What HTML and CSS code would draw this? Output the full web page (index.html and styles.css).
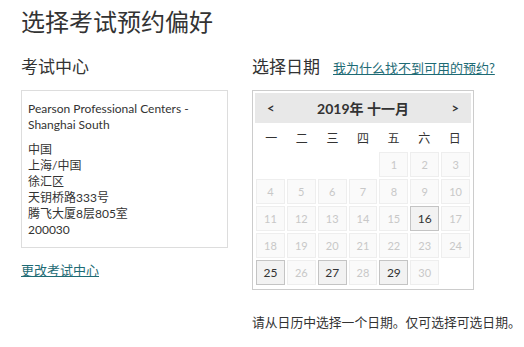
FILE: index.html
```
<!doctype html>
<html lang="zh-CN"><head>
<meta charset="utf-8">
<title>选择考试预约偏好</title>
<link rel="stylesheet" href="styles.css">
</head>
<body>
<div class="page">
<h1>选择考试预约偏好</h1>

<div class="columns">
	<div class="col-left">
		<h2>考试中心</h2>
		<div class="center-box">
			<div class="center-name">Pearson Professional Centers - Shanghai South</div>
			<div class="center-addr">
				中国<br>
				上海/中国<br>
				徐汇区<br>
				天钥桥路333号<br>
				腾飞大厦8层805室<br>
				200030
			</div>
		</div>
		<a class="link change" href="#">更改考试中心</a>
	</div>

	<div class="col-right">
		<div class="date-head">
			<h2>选择日期</h2>
			<a class="link why" href="#">我为什么找不到可用的预约?</a>
		</div>
		<div class="calendar">
			<div class="cal-bar">
				<span class="nav">&lt;</span>
				<span class="month">2019年 十一月</span>
				<span class="nav">&gt;</span>
			</div>
			<div class="weekdays">
				<span>一</span><span>二</span><span>三</span><span>四</span><span>五</span><span>六</span><span>日</span>
			</div>
			<div class="days">
				<span class="blank"></span><span class="blank"></span><span class="blank"></span><span class="blank"></span>
				<span>1</span><span>2</span><span>3</span>
				<span>4</span><span>5</span><span>6</span><span>7</span><span>8</span><span>9</span><span>10</span>
				<span>11</span><span>12</span><span>13</span><span>14</span><span>15</span><span class="open">16</span><span>17</span>
				<span>18</span><span>19</span><span>20</span><span>21</span><span>22</span><span>23</span><span>24</span>
				<span class="open">25</span><span>26</span><span class="open">27</span><span>28</span><span class="open">29</span><span>30</span>
			</div>
		</div>
		<p class="hint">请从日历中选择一个日期。仅可选择可选日期。</p>
	</div>
</div>
</div>
</body></html>
```

FILE: styles.css
```
body {
	margin: 0;
	font-family: Lato, "Noto Sans CJK SC", sans-serif;
	color: #333;
	background: #fff;
}
.page { padding: 6px 0 0 21px; }
h1 {
	margin: 0;
	font-size: 24px;
	line-height: 32px;
	font-weight: normal;
}
h2 {
	margin: 0;
	font-size: 17px;
	line-height: 24px;
	font-weight: normal;
}
.columns {
	display: flex;
	gap: 24px;
	margin-top: 17px;
}
.col-left { width: 207px; }
.col-right { flex: 1; }

.center-box {
	margin-top: 11px;
	border: 1px solid #ddd;
	padding: 10px 6px 9px 6px;
	font-size: 12px;
	line-height: 16px;
}
.center-addr { margin-top: 9px; }

.link {
	color: #1e6b75;
	text-decoration: underline;
}
.change {
	display: block;
	margin-top: 14px;
	font-size: 13px;
	line-height: 16px;
}

.date-head {
	display: flex;
	align-items: baseline;
	gap: 13px;
}
.why { font-size: 13px; }

.calendar {
	margin-top: 11px;
	width: 216px;
	border: 1px solid #ccc;
	padding: 2px 2px 4px 2px;
}
.cal-bar {
	display: flex;
	justify-content: space-between;
	align-items: center;
	height: 30px;
	padding: 0 12px;
	background: #e8e8e8;
	font-weight: bold;
}
.cal-bar .month { font-size: 14px; }
.cal-bar .nav { font-size: 13px; }
.weekdays {
	display: grid;
	grid-template-columns: repeat(7, 1fr);
	height: 29px;
	align-items: center;
	text-align: center;
	font-size: 12px;
	margin: 0 1px;
}
.days {
	display: grid;
	grid-template-columns: repeat(7, 1fr);
	grid-auto-rows: 25px;
	gap: 2px;
	margin: 0 1px;
}
.days span {
	display: flex;
	align-items: center;
	justify-content: center;
	border: 1px solid #eee;
	background: #fafafa;
	color: #c8c8c8;
	font-size: 11px;
}
.days span.blank {
	border: none;
	background: none;
}
.days span.open {
	border-color: #c4c4c4;
	background: #f2f2f2;
	color: #333;
	font-size: 12px;
}

.hint {
	margin: 24px 0 0 0;
	font-size: 12.8px;
	line-height: 16px;
	white-space: nowrap;
}
```
